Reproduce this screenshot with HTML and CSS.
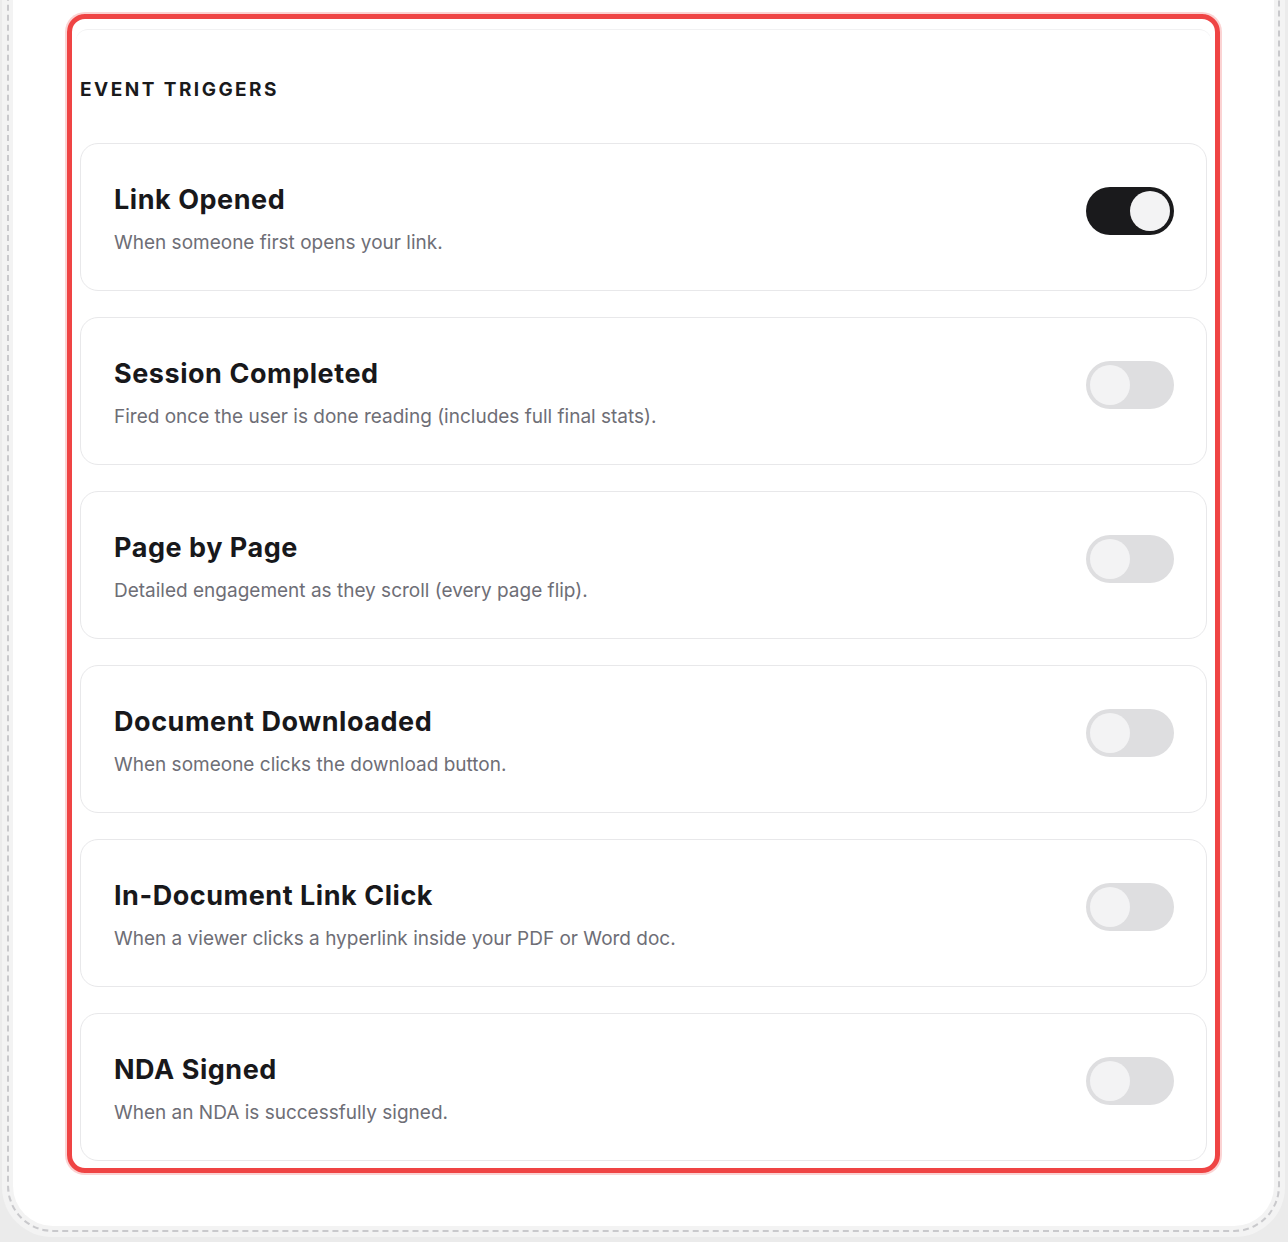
FILE: index.html
```html
<!DOCTYPE html>
<html lang="en">
<head>
<meta charset="utf-8">
<title>Event Triggers</title>
<link rel="stylesheet" href="styles.css">
</head>
<body>
<div class="frame">
  <div class="stitch">
    <div class="sheet">
      <div class="highlight">
        <div class="panel">
          <h2 class="section-title">EVENT TRIGGERS</h2>
          <div class="list">
            <div class="card">
              <div class="text">
                <div class="title">Link Opened</div>
                <div class="desc">When someone first opens your link.</div>
              </div>
              <div class="toggle on"><span class="knob"></span></div>
            </div>
            <div class="card">
              <div class="text">
                <div class="title">Session Completed</div>
                <div class="desc">Fired once the user is done reading (includes full final stats).</div>
              </div>
              <div class="toggle"><span class="knob"></span></div>
            </div>
            <div class="card">
              <div class="text">
                <div class="title">Page by Page</div>
                <div class="desc">Detailed engagement as they scroll (every page flip).</div>
              </div>
              <div class="toggle"><span class="knob"></span></div>
            </div>
            <div class="card">
              <div class="text">
                <div class="title">Document Downloaded</div>
                <div class="desc">When someone clicks the download button.</div>
              </div>
              <div class="toggle"><span class="knob"></span></div>
            </div>
            <div class="card">
              <div class="text">
                <div class="title">In-Document Link Click</div>
                <div class="desc">When a viewer clicks a hyperlink inside your PDF or Word doc.</div>
              </div>
              <div class="toggle"><span class="knob"></span></div>
            </div>
            <div class="card">
              <div class="text">
                <div class="title">NDA Signed</div>
                <div class="desc">When an NDA is successfully signed.</div>
              </div>
              <div class="toggle"><span class="knob"></span></div>
            </div>
          </div>
        </div>
      </div>
    </div>
  </div>
</div>
</body>
</html>
```
FILE: styles.css
```css
* { box-sizing: border-box; }
html, body { margin: 0; padding: 0; }
body {
  background: #ebebeb;
  font-family: Inter, "Noto Sans", sans-serif;
  height: 1242px;
  overflow: hidden;
}
.frame {
  margin: -60px 3px 0 2px;
  background: #f3f3f3;
  border-radius: 50px;
  padding: 5px;
}
.stitch {
  border: 2px dashed #c9c9cc;
  border-radius: 46px;
  padding: 4px;
}
.sheet {
  background: #fff;
  border-radius: 40px;
  padding: 63px 54px 53px 54px;
}
.highlight {
  border: 5px solid #ef4444;
  border-radius: 18px;
  box-shadow: 0 0 0 2px #fbd3d3;
  padding: 10px 4px 7px 4px;
}
.panel {
  border-top: 1px solid #f1f1f2;
  border-radius: 12px 12px 0 0;
  padding: 0 4px;
}
.section-title {
  margin: 0;
  padding: 50px 0 43px 0;
  font-size: 19px;
  line-height: 20px;
  font-weight: 700;
  letter-spacing: 0.13em;
  color: #1a1a1c;
}
.list {
  display: flex;
  flex-direction: column;
  gap: 26px;
}
.card {
  height: 148px;
  border: 1px solid #e8e8ea;
  border-radius: 18px;
  padding: 40px 32px 0 33px;
  display: flex;
  align-items: flex-start;
  justify-content: space-between;
}
.title {
  font-size: 27px;
  line-height: 32px;
  font-weight: 700;
  letter-spacing: 0.02em;
  color: #18181b;
}
.desc {
  margin-top: 15px;
  font-size: 19px;
  line-height: 24px;
  color: #6e6e76;
}
.toggle {
  width: 88px;
  height: 48px;
  margin-top: 3px;
  border-radius: 24px;
  background: #dedee0;
  padding: 4px;
  display: flex;
  flex: none;
}
.knob {
  width: 40px;
  height: 40px;
  border-radius: 50%;
  background: #f3f3f4;
}
.toggle.on {
  background: #1a1a1c;
  justify-content: flex-end;
}
```
